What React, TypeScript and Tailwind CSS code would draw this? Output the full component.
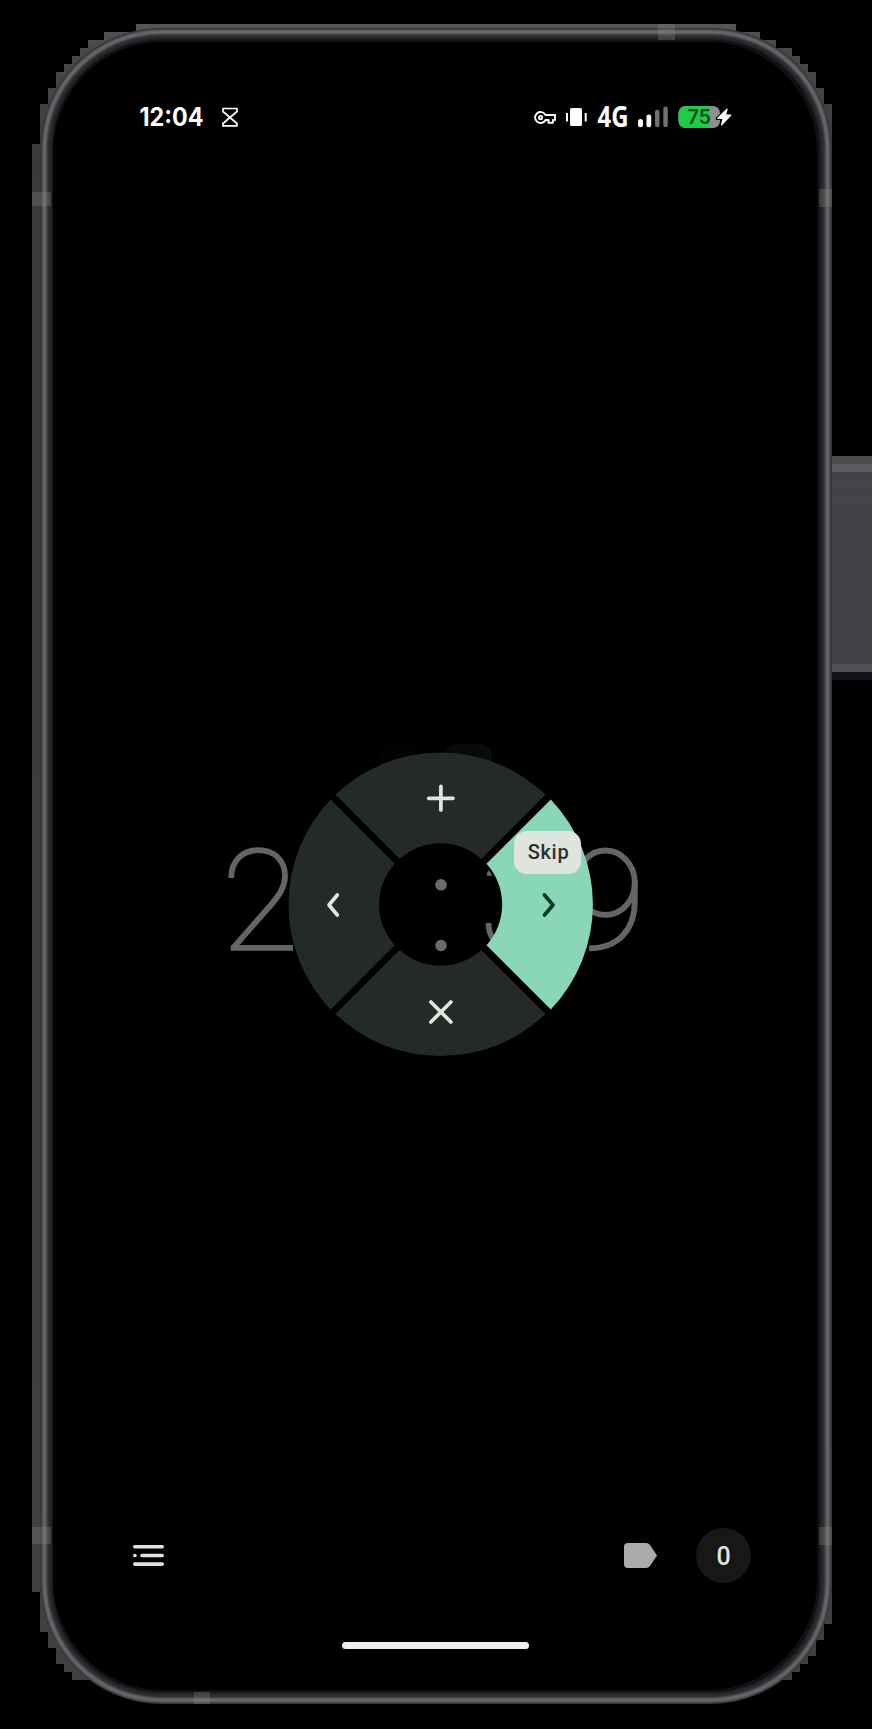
import React from "react";

const RIM = [
  [0, "#343436"],
  [1, "#48484a"],
  [2, "#5c5b5f"],
  [3, "#67666b"],
  [4, "#67666b"],
  [5, "#5a595e"],
  [6, "#434247"],
  [7, "#333236"],
  [8, "#2d2c30"],
  [9, "#29282d"],
  [10, "#242328"],
  [11, "#1d1d21"],
  [12, "#101012"],
] as const;

function Device() {
  return (
    <svg className="absolute inset-0" width="872" height="1729" viewBox="0 0 872 1729">
      <defs>
        <linearGradient id="edge" x1="0" y1="0" x2="0" y2="1">
          <stop offset="0" stopColor="#565656" />
          <stop offset="0.015" stopColor="#484848" />
          <stop offset="0.08" stopColor="#3a3a3a" />
          <stop offset="1" stopColor="#404040" />
        </linearGradient>
      </defs>
      <rect x="831" width="41" height="1729" fill="#010104" />
      <g shapeRendering="crispEdges">
        <path
          fill="url(#edge)"
          d="M136 24H736V32H760V40H776V48H792V56H800V64H808V72H816V88H824V104H832V1624H824V1640H816V1656H808V1664H800V1672H792V1680H700V1650H160V1680H72V1672H64V1664H56V1648H48V1632H40V1592H32V144H40V104H48V88H56V72H64V64H72V56H80V48H88V40H104V32H136Z"
        />
        <path fill="#4c4c4c" d="M832 456h40v8h-40z" />
        <path fill="#5d5c60" d="M832 464h40v8h-40z" />
        <path fill="#434248" d="M832 472h40v192h-40z" />
        <path fill="#45444d" d="M832 480h40v8h-40zM832 496h40v8h-40z" />
        <path fill="#515055" d="M832 664h40v8h-40z" />
        <path fill="#131217" d="M832 672h40v8h-40z" />
      </g>
      {RIM.map(([i, c]) => (
        <rect key={i} x={40.5 + i} y={28 + i} width={791 - 2 * i} height={1676 - 2 * i} rx={121 - i} fill={c} />
      ))}
      <rect x="53" y="42" width="764" height="1648" rx="110" fill="#000" />
      <g fill="#888" opacity="0.3">
        <path d="M32 192h19v14h-19zM819 189h13v18h-13zM658 24h17v16h-17zM32 1527h19v17h-19zM819 1527h13v18h-13zM194 1692h16v12h-16z" />
      </g>
    </svg>
  );
}

function StatusBar() {
  return (
    <header className="flex h-[30px] items-center justify-between pl-[86px] pr-[84px] text-white">
      <div className="flex items-center gap-[19px]">
        <svg width="64" height="30" className="block overflow-visible">
          <text x="0.500" y="23.500" textLength="64" lengthAdjust="spacingAndGlyphs" fill="#fff" className="font-[Inter] text-[25px] font-bold">12:04</text>
        </svg>
        <svg width="16" height="20" viewBox="0 0 16 20" fill="none" stroke="#fff" strokeWidth="1.7" strokeLinejoin="round">
          <path d="M1 1.5H15V4.5L8 10.5L15 16.500V18.900H1V16.500L8 10.5L1 4.5Z" />
        </svg>
      </div>
      <svg width="199" height="30" viewBox="0 0 199 30" className="overflow-visible">
        <g fill="none" stroke="#fff" strokeWidth="1.9" strokeLinejoin="round">
          <path d="M11.500 13A5.500 5.500 0 1 0 11.500 18H14.5V20.800H19V18H21V13Z" />
          <circle cx="6.600" cy="15.500" r="1.600" />
        </g>
        <g fill="#fff">
          <rect x="36" y="6" width="12" height="18" rx="1.5" />
          <rect x="32" y="11" width="2" height="8.500" />
          <rect x="50.700" y="11" width="2" height="8.500" />
          <text x="63.500" y="25" textLength="31" lengthAdjust="spacingAndGlyphs" className="font-['Open_Sans'] text-[28.500px] font-bold">4G</text>
          <rect x="104" y="17" width="5" height="8.300" rx="2.5" />
          <rect x="112.500" y="12.500" width="4.700" height="12.800" rx="2.300" />
          <rect x="121" y="7.700" width="4.500" height="17.600" rx="2.2" fill="#717171" />
          <rect x="129.300" y="4.500" width="4.500" height="20.800" rx="2.2" fill="#717171" />
        </g>
        <rect x="144.500" y="4" width="41.500" height="22" rx="7" fill="#8f8f8f" />
        <path d="M151.500 4H176V26H151.500A7 7 0 0 1 144.500 19V11A7 7 0 0 1 151.500 4Z" fill="#1fcb4b" />
        <text x="153.800" y="22.300" textLength="23" lengthAdjust="spacingAndGlyphs" fill="#054d16" className="font-[Inter] text-[20px] font-semibold">75</text>
        <path d="M193 6.800L183.200 16.600H188.600L187 23.200L197.300 12.800H191.800Z" stroke="#000" strokeWidth="3" strokeLinejoin="round" />
        <path d="M193 7.200L183.800 16.300H189.200L187.600 22.800L196.800 13.100H191.300Z" fill="#fff" stroke="#fff" strokeWidth="1.300" strokeLinejoin="round" />
      </svg>
    </header>
  );
}

function RadialTimer() {
  return (
    <div className="relative h-[340px] w-[430px]">
      <svg className="absolute inset-0" width="430" height="340" viewBox="220 730 430 340">
        <rect x="380" y="745" width="42" height="24" rx="10" fill="#030303" />
        <rect x="445" y="744" width="47" height="24" rx="12" fill="#0a0a0a" />
        <g fill="none" stroke="#656565" strokeWidth="5.800">
          <path d="M231.200 878C231.200 861 242 850.200 258.200 850.200C275 850.200 285 861 285 876C285 887 279.500 895 270 906L233.200 947.800" />
          <path d="M230.700 947.800H293" />
          <ellipse cx="605.500" cy="882.700" rx="29.300" ry="32.200" />
          <path d="M634.800 880V901C634.800 930 618 948.300 589 948.300" />
          <path d="M488.500 923C488.500 938 497 948 514 948" />
        </g>
        <path d="M487 875.700V873L489 870L492.500 875.700Z" fill="#656565" />
        <circle cx="441" cy="884.800" r="5.800" fill="#6b6b6b" />
        <circle cx="441" cy="945.500" r="5.800" fill="#6b6b6b" />
        <g fill="#242b27">
          <path d="M335.500 794.600A152 152 0 0 1 545.500 794.600L481.300 858.900A61 61 0 0 0 399.700 858.900Z" />
          <path d="M335.500 1014A152 152 0 0 0 545.500 1014L481.300 950.100A61 61 0 0 1 399.700 950.100Z" />
          <path d="M330.600 799.500A152 152 0 0 0 330.600 1009.500L394.700 945.300A61 61 0 0 1 394.700 863.700Z" />
        </g>
        <path d="M550.800 799.500A152 152 0 0 1 550.800 1009.500L486.500 945.300A61 61 0 0 0 486.500 863.700Z" fill="#89d6b8" />
        <g fill="none" stroke="#e0e5e0" strokeWidth="3.700" strokeLinecap="round">
          <path d="M428.700 798.300H453M440.900 786.300V810" />
          <path d="M337.300 895L329 905L337.300 915" strokeLinejoin="round" />
          <path d="M430.900 1002L450.900 1022M450.900 1002L430.900 1022" />
          <path d="M544.500 895L553 905L544.500 915" stroke="#003828" strokeLinejoin="round" />
        </g>
      </svg>
      <div className="absolute left-[294px] top-[101px] flex h-[43px] w-[67px] items-center justify-center rounded-[13px] bg-[#dfe4df] pb-px pl-[2px]">
        <span className="font-[Roboto] text-[20px] font-medium leading-[22px] tracking-[0.7px] text-[#2a312d]">Skip</span>
      </div>
    </div>
  );
}

function BottomBar() {
  return (
    <footer className="flex h-[56px] items-center justify-between pl-[80px] pr-[66px]">
      <svg width="32" height="22" viewBox="0 0 32 22" stroke="#dfe3df" strokeWidth="3.600" strokeLinecap="round">
        <path d="M1.800 2.700H29.200M1.800 11.500H2M9 11.500H29.200M1.800 20.100H29.200" />
      </svg>
      <div className="flex items-center gap-[39px]">
        <svg width="33" height="25" viewBox="0 0 33 25">
          <path d="M4 0H22Q24.500 0 26 2L33 12.500L26 23Q24.500 25 22 25H4Q0 25 0 21V4Q0 0 4 0Z" fill="#ababab" />
        </svg>
        <button className="flex size-[55px] items-center justify-center rounded-full bg-[#171717] pt-[3px] font-[Roboto] text-[25px] font-medium leading-[28px] text-[#e1e4e1]">0</button>
      </div>
    </footer>
  );
}

export default function App() {
  return (
    <div className="relative h-[1729px] w-[872px] overflow-hidden bg-black">
      <Device />
      <main className="relative ml-[53px] flex w-[764px] flex-col pt-[102px]">
        <StatusBar />
        <div className="ml-[167px] mt-[598px]">
          <RadialTimer />
        </div>
        <div className="mt-[457px]">
          <BottomBar />
        </div>
        <div className="ml-[289px] mt-[59px] h-[7px] w-[187px] rounded-full bg-[#eceeec]" />
      </main>
    </div>
  );
}
